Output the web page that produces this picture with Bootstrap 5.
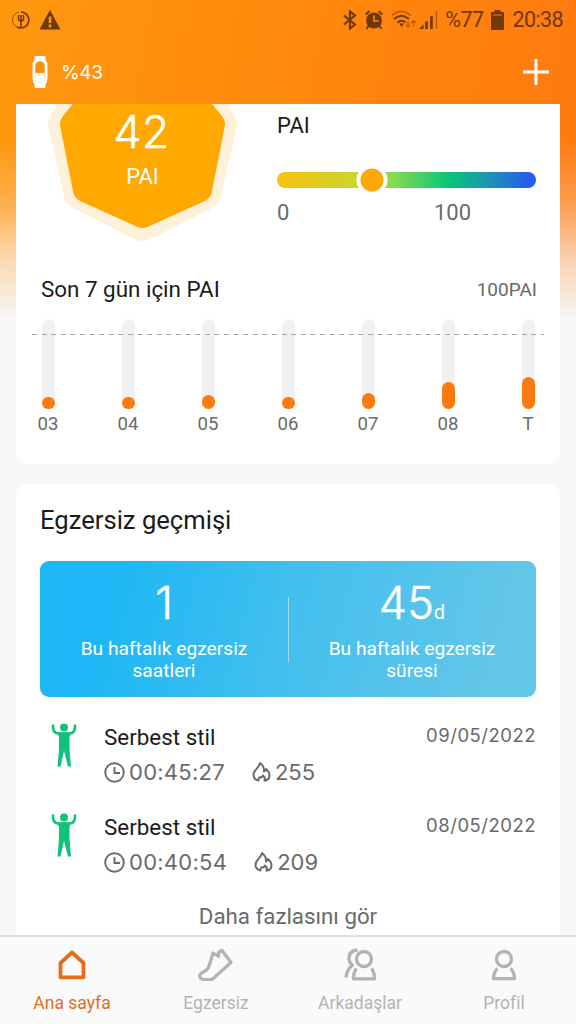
<!DOCTYPE html>
<html lang="tr">

<head>
  <meta charset="UTF-8">
  <meta name="viewport" content="width=device-width, initial-scale=1">
  <title>Ana sayfa</title>
  <link href="https://cdn.jsdelivr.net/npm/bootstrap@5.3.3/dist/css/bootstrap.min.css" rel="stylesheet">
  <script src="https://cdn.jsdelivr.net/npm/bootstrap@5.3.3/dist/js/bootstrap.bundle.min.js"></script>
  <style>
    body {
      font-family: Roboto, "Liberation Sans", sans-serif;
      font-size: 22px;
      line-height: 22px;
      color: #1b1b1b;
    }

    svg {
      display: block;
      flex-shrink: 0;
    }

    .app {
      height: 1024px;
      background:
        linear-gradient(180deg, rgba(247, 247, 247, 0) 140px, rgba(247, 247, 247, .28) 205px, rgba(247, 247, 247, .7) 260px, #f7f7f7 320px),
        linear-gradient(100deg, #ff980f, #ff850d 50%, #fd7411);
    }

    .num {
      font-family: Inter, "Liberation Sans", sans-serif;
      font-weight: 300;
    }

    .num.grey { font-weight: 400; }

    .grey { color: #6a6a6a; }

    /* status bar and header */
    .status {
      height: 40px;
      padding: 0 13px 0 12px;
      color: #70390a;
    }

    .status-text {
      font-size: 21.5px;
      letter-spacing: -.6px;
    }

    .topbar {
      height: 64px;
      padding: 0 27px 0 32px;
    }

    .battery-text {
      font-size: 19px;
      font-weight: 400;
      letter-spacing: -.4px;
      margin: 2px 0 0 13px;
    }

    /* PAI */
    .panel { margin: 0 16px; }

    .pai-panel {
      height: 360px;
      border-radius: 0 0 10px 10px;
    }

    .pai-top { height: 171px; }

    .pai-scale {
      width: 259px;
      padding-top: 11px;
    }

    .scale-bar {
      height: 16px;
      margin: 35px 0 14px;
      background: linear-gradient(90deg, #f8c10c, #ccd52e 30%, #8fdc4c 43%, #0ac67a 66%, #1c93b4 82%, #235eee 97%);
    }

    .scale-knob {
      width: 31px;
      height: 31px;
      left: 95px;
      background: #fca80a;
      border: 4px solid #fff;
    }

    .scale-labels { padding-right: 65px; }

    .week-head {
      height: 30px;
      padding: 0 23px 0 25px;
      font-size: 22.4px;
      margin-bottom: 14px;
    }

    .week-title { margin-top: -2px; }

    .week-goal { font-size: 19px; }

    .week { padding: 0 16px; }

    .goal-line {
      left: 16px;
      top: 15px;
      width: 512px;
      height: 1px;
      background: repeating-linear-gradient(90deg, #a5a5a5 0 5px, transparent 5px 9.6px);
    }

    .day {
      width: 32px;
      font-size: 18.5px;
      line-height: 20px;
    }

    .day-track {
      width: 13px;
      height: 90px;
      margin-bottom: 5px;
      background: #f1f1f1;
    }

    .day-value { background: #fb7a10; }

    /* exercise history */
    .history {
      height: 451px;
      margin-top: 20px;
      padding: 21px 24px 0;
      border-radius: 10px 10px 0 0;
    }

    .history-title {
      font-size: 25.6px;
      line-height: 31px;
      margin-bottom: 25px;
    }

    .summary {
      height: 136px;
      border-radius: 9px;
      background: linear-gradient(105deg, #1db7f5 15%, #43bfee 50%, #62c6e9 90%);
    }

    .summary-item {
      width: 50%;
      padding-top: 22px;
      font-size: 19.2px;
    }

    .summary-value {
      height: 40px;
      font-size: 45px;
      line-height: 40px;
      margin-bottom: 15px;
      -webkit-text-stroke: .5px #fff;
    }

    .summary-unit {
      font-family: Roboto, sans-serif;
      font-weight: 400;
      font-size: 20px;
      line-height: 20px;
      -webkit-text-stroke: 0;
    }

    .summary-line {
      left: 248px;
      top: 36px;
      width: 1px;
      height: 65px;
      background: rgba(255, 255, 255, .5);
    }

    .workout {
      height: 90px;
      padding: 26px 0 0 11px;
    }

    .workouts { margin-bottom: 28px; }

    .workout-body { margin-left: 27px; }

    .workout-name {
      font-size: 22.4px;
      margin: 3px 0 13px;
    }

    .workout-time {
      letter-spacing: .25px;
      margin-right: 27px;
    }

    .workout-date {
      font-size: 18.5px;
      letter-spacing: .5px;
      margin-top: 1px;
    }

    .more-link { font-size: 22.3px; }

    /* bottom navigation */
    .tabs {
      height: 89px;
      background: #fafafa;
      border-top: 2px solid #dedede;
    }

    .tab-item {
      width: 25%;
      padding-top: 10px;
      font-size: 17.5px;
      color: #b3b3b3;
    }

    .tab-item svg { margin-bottom: 9px; }

    .tab-item.current { color: #e36d1b; }
  </style>
</head>

<body>
  <div class="app d-flex flex-column overflow-hidden">

    <div class="status d-flex align-items-center">
      <svg width="19" height="20" viewBox="0 0 19 20" fill="none" stroke="currentColor">
        <path d="M9 2a8 8 0 1 1-4 15" stroke-width="1.6" />
        <path d="M5 17A8 8 0 0 1 7 2" stroke-width=".7" />
        <path d="M6.500 5v4q0 2 2.500 2t2.500-2V5M9 5v12" stroke-width="1.500" />
      </svg>
      <svg class="ms-2" width="22" height="20" viewBox="0 0 22 20">
        <path d="M11 0 21.500 19.500H.5z" fill="currentColor" />
        <path d="M11 6.500v6.500M11 14.500v3" stroke="#fd930f" stroke-width="2.600" />
      </svg>
      <div class="ms-auto d-flex align-items-center">
        <svg width="14" height="20" viewBox="0 0 14 20" fill="none" stroke="currentColor" stroke-width="2.200">
          <path d="m1 5.500 11 9-5 4V1.500l5 4-11 9" />
        </svg>
        <svg class="ms-2" width="18" height="20" viewBox="0 0 18 20">
          <circle cx="9" cy="10.500" r="8" fill="currentColor" />
          <path d="M.7 4.500 4.500 1M17.300 4.500 13.500 1M3.500 16l-2 3M14.500 16l2 3" stroke="currentColor" stroke-width="2" />
          <path d="M9 5.500V11h4.500" fill="none" stroke="#ff850d" stroke-width="1.700" />
        </svg>
        <svg class="ms-2" width="50" height="22" viewBox="0 0 50 22" fill="none" stroke="currentColor">
          <path d="M1 6.500q9-8 19 0" stroke-width="1.300" opacity=".55" />
          <path d="M3 10q7.500-6.500 15 0" stroke-width="2" />
          <path d="M6.500 13.500q4-3.500 8 0" stroke-width="2" />
          <path d="m8 14.500 2.500 3.500 2.500-3.500z" fill="currentColor" stroke="none" />
          <path d="M17 12v6m-2-2 2 2 2-2M22.500 18v-6m-2.500 2 2.500-2.500L25 14" stroke-width="1.100" opacity=".55" />
          <path d="m28 20 4.500-4.500V20z" fill="currentColor" stroke="none" />
          <path d="M35.500 20v-7.500M40.500 20V7" stroke-width="2.600" />
          <path d="M45.500 20V2" stroke-width="1.500" opacity=".5" />
        </svg>
        <span class="status-text ms-1">%77</span>
        <svg class="mx-2" width="13" height="20" viewBox="0 0 13 20">
          <path d="M3.500 0h6v2H13v18H0V2h3.500z" fill="currentColor" />
          <path d="M2 5h9" stroke="#c6690d" stroke-width="1.500" />
        </svg>
        <span class="status-text">20:38</span>
      </div>
    </div>

    <div class="topbar d-flex align-items-center text-white">
      <svg width="16" height="32" viewBox="0 0 16 32">
        <path d="M2.500 0h11v4q2 2 2 6v12q0 4-2 6v4h-11v-4q-2-2-2-6V10q0-4 2-6z" fill="#fff" />
        <path d="M3.300 17v-7a4.700 4.700 0 0 1 9.400 0v7z" fill="#fb920f" />
        <path d="M3.300 17v5a4.700 4.700 0 0 0 9.400 0v-5" fill="none" stroke="#ffdcae" stroke-width=".8" />
      </svg>
      <span class="battery-text num">%43</span>
      <svg class="ms-auto" width="26" height="26" viewBox="0 0 26 26">
        <path d="M13 0v26M0 13h26" stroke="#fff" stroke-width="3" />
      </svg>
    </div>

    <div class="panel pai-panel bg-white">
      <div class="pai-top d-flex">
        <svg width="261" height="150" viewBox="16 104 261 150">
          <path d="M142.500 226 79 194 63 124 88 84h109l25 40-16 70z" fill="#fff0d9" stroke="#fff0d9" stroke-width="30" stroke-linejoin="round" />
          <path d="M142.500 216 85 190 72 124 108 80h69l36 44-13 66z" fill="#ffa800" stroke="#ffa800" stroke-width="24" stroke-linejoin="round" />
          <text class="num" x="141.500" y="148" font-size="45" text-anchor="middle" fill="#fff" stroke="#fff" stroke-width=".5">42</text>
          <text x="142.500" y="184" font-size="22" text-anchor="middle" fill="#fff">PAI</text>
        </svg>
        <div class="pai-scale">
          <div>PAI</div>
          <div class="scale-bar rounded-pill position-relative">
            <div class="scale-knob rounded-circle position-absolute top-50 translate-middle"></div>
          </div>
          <div class="scale-labels d-flex justify-content-between grey">
            <span>0</span>
            <span>100</span>
          </div>
        </div>
      </div>

      <div class="week-head d-flex justify-content-between align-items-center">
        <span class="week-title">Son 7 gün için PAI</span>
        <span class="week-goal grey">100PAI</span>
      </div>

      <div class="week d-flex justify-content-between position-relative" id="week">
        <div class="goal-line position-absolute"></div>
      </div>
    </div>

    <div class="panel history bg-white flex-shrink-0">
      <div class="history-title">Egzersiz geçmişi</div>
      <div class="summary d-flex text-white text-center position-relative">
        <div class="summary-item">
          <div class="summary-value num">1</div>
          <div>Bu haftalık egzersiz<br>saatleri</div>
        </div>
        <div class="summary-line position-absolute"></div>
        <div class="summary-item">
          <div class="summary-value num">45<span class="summary-unit">d</span></div>
          <div>Bu haftalık egzersiz<br>süresi</div>
        </div>
      </div>
      <div class="workouts" id="workouts"></div>
      <div class="more-link text-center grey">Daha fazlasını gör</div>
    </div>

    <nav class="tabs d-flex flex-shrink-0">
      <div class="tab-item current d-flex flex-column align-items-center">
        <svg width="36" height="36" viewBox="0 0 36 36" fill="none" stroke="currentColor" stroke-width="3.800" stroke-linejoin="round">
          <path d="M18 5.500 29.500 16v14.300h-23V16z" />
        </svg>
        <span>Ana sayfa</span>
      </div>
      <div class="tab-item d-flex flex-column align-items-center">
        <svg width="36" height="36" viewBox="0 0 36 36" fill="none" stroke="currentColor" stroke-width="3.200" stroke-linejoin="round" stroke-linecap="round">
          <path d="M15 6 12 16q-1.500 5.500-4 7.500l-4.500 2.500Q1 27.500 2 30q1 2.500 4 2.500h8L33 15.500 24 3.500l-3.500 2v4L15 6z" />
        </svg>
        <span>Egzersiz</span>
      </div>
      <div class="tab-item d-flex flex-column align-items-center">
        <svg width="36" height="36" viewBox="0 0 36 36" fill="none" stroke="currentColor" stroke-width="3.300" stroke-linejoin="round">
          <circle cx="22" cy="12" r="7.500" />
          <path d="M14.500 21.500q-3 4-3 10.300h21q0-6.300-3-10.300" />
          <path d="M15.500 3Q6.500 4 7 12q.3 4 3.500 6.200Q5 22 4 30.500" />
        </svg>
        <span>Arkadaşlar</span>
      </div>
      <div class="tab-item d-flex flex-column align-items-center">
        <svg width="36" height="36" viewBox="0 0 36 36" fill="none" stroke="currentColor" stroke-width="3.300" stroke-linejoin="round">
          <circle cx="18" cy="12" r="7.500" />
          <path d="M11.500 21.500Q7.500 25 7.500 31.700h21q0-6.700-4-10.200" />
        </svg>
        <span>Profil</span>
      </div>
    </nav>
  </div>

  <script>
    // bar heights in px
    const days = [
      ['03', 12], ['04', 12], ['05', 14], ['06', 12], ['07', 16], ['08', 27], ['T', 32]
    ];

    days.forEach(([label, value]) => {
      document.getElementById('week').innerHTML += `
        <div class="day d-flex flex-column align-items-center grey">
          <div class="day-track rounded-pill d-flex align-items-end">
            <div class="day-value rounded-pill w-100" style="height: ${value}px"></div>
          </div>
          <span>${label}</span>
        </div>`;
    });

    // keep the goal line above the tracks
    const week = document.getElementById('week');
    week.append(week.querySelector('.goal-line'));

    const workouts = [
      { name: 'Serbest stil', date: '09/05/2022', time: '00:45:27', calories: 255 },
      { name: 'Serbest stil', date: '08/05/2022', time: '00:40:54', calories: 209 }
    ];

    workouts.forEach(w => {
      document.getElementById('workouts').innerHTML += `
        <div class="workout d-flex align-items-start">
          <svg width="26" height="44" viewBox="0 0 26 44" fill="#10c27c">
            <circle cx="13" cy="4.500" r="4" />
            <path d="M2 2.500Q1.500 10 7 10.500h12q5.500-.5 5-8" fill="none" stroke="#10c27c" stroke-width="2.600" stroke-linecap="round" />
            <path d="M6 9.500h14L18.500 14v12l1.500 17.500h-3L13 28 9.500 43.500H6.500L8 26V14z" />
          </svg>
          <div class="workout-body">
            <div class="workout-name">${w.name}</div>
            <div class="d-flex align-items-center num grey">
              <svg class="me-1" width="21" height="21" viewBox="0 0 21 21" fill="none" stroke="currentColor" stroke-width="1.900">
                <circle cx="10.500" cy="10.500" r="9.300" />
                <path d="M10.500 5v6h5.500" />
              </svg>
              <span class="workout-time">${w.time}</span>
              <svg class="me-1" width="19" height="22" viewBox="0 0 19 22" fill="none" stroke="currentColor" stroke-width="2" stroke-linejoin="round">
                <path d="M6.500 19.500Q1.500 18.500 1.500 13.500C1.500 9 7.500 7 8 2q4.500 3.500 4 8.500 1.500-.5 2-2.500 3.500 3 3.500 6.500 0 4.500-5 5.200 1.300-2.700-1.500-5.200-.7 1.500-2 2-1.500-.5-2 .5-.8 1.200-.5 2.500z" />
              </svg>
              <span>${w.calories}</span>
            </div>
          </div>
          <div class="workout-date num grey ms-auto">${w.date}</div>
        </div>`;
    });
  </script>
</body>

</html>
